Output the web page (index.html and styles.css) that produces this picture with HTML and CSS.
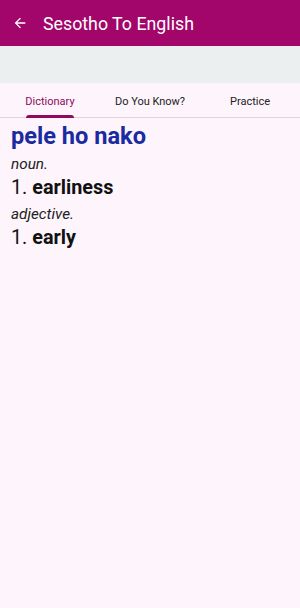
FILE: index.html
```html
<!DOCTYPE html>
<html>
<head>
<meta charset="utf-8">
<link rel="stylesheet" href="styles.css">
</head>
<body>
<div class="app">
  <header class="topbar">
    <svg class="back" width="16" height="16" viewBox="0 0 24 24"><path d="M20 11H7.83l5.59-5.59L12 4l-8 8 8 8 1.41-1.41L7.83 13H20v-2z" fill="#fff"/></svg>
    <span class="title">Sesotho To English</span>
  </header>
  <div class="band"></div>
  <nav class="tabs">
    <div class="tab active">Dictionary</div>
    <div class="tab">Do You Know?</div>
    <div class="tab">Practice</div>
  </nav>
  <main class="content">
    <div class="word">pele ho nako</div>
    <div class="pos">noun.</div>
    <div class="def">1. <b>earliness</b></div>
    <div class="pos">adjective.</div>
    <div class="def">1. <b>early</b></div>
  </main>
</div>
</body>
</html>
```
FILE: styles.css
```css
html, body { margin: 0; padding: 0; }
body { font-family: Roboto, "Noto Sans", sans-serif; background: #fdf5fb; width: 300px; height: 608px; overflow: hidden; }
.topbar { height: 46px; background: #a2066a; display: flex; align-items: center; color: #fff; }
.back { margin-left: 12px; }
.title { margin-left: 15px; font-size: 17.8px; }
.band { height: 37px; background: #ecefef; }
.tabs { display: flex; height: 34px; border-bottom: 1px solid #dcd6da; }
.tab { flex: 1; display: flex; justify-content: center; align-items: center; font-size: 11px; color: #222; position: relative; padding-top: 2px; }
.tab.active { color: #8e0a5e; }
.tab.active::after { content: ""; position: absolute; bottom: -1px; left: 26px; right: 26px; height: 3px; background: #8e0a5e; border-radius: 3px 3px 0 0; }
.content { padding: 4px 11px; }
.word { font-size: 23.6px; font-weight: bold; color: #1a2aa0; line-height: 28px; margin-bottom: 2px; }
.pos { font-size: 15.3px; font-style: italic; color: #222; line-height: 22px; margin-top: 3px; }
.def { font-size: 19.8px; color: #111; line-height: 25px; }
.def b { font-weight: bold; }
```
